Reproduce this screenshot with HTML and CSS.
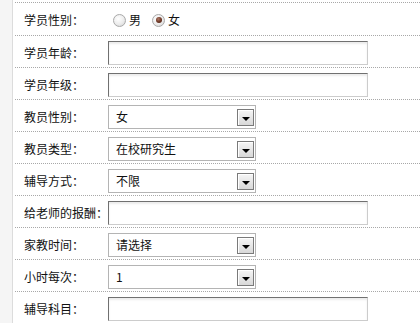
FILE: index.html
```html
<!DOCTYPE html>
<html lang="zh-CN">
<head>
<meta charset="utf-8">
<title>家教信息</title>
<link rel="stylesheet" href="styles.css">
</head>
<body>
<div class="page">
  <div class="side"></div>
  <div class="form">
    <div class="row first">
      <span class="label">学员性别：</span>
      <span class="radios">
        <span class="radio"></span><span class="opt">男</span>
        <span class="radio checked"></span><span class="opt">女</span>
      </span>
    </div>
    <div class="row">
      <span class="label">学员年龄：</span>
      <span class="input"></span>
    </div>
    <div class="row">
      <span class="label">学员年级：</span>
      <span class="input"></span>
    </div>
    <div class="row">
      <span class="label">教员性别：</span>
      <span class="select"><span class="val">女</span><span class="btn"><span class="tri"></span></span></span>
    </div>
    <div class="row">
      <span class="label">教员类型：</span>
      <span class="select"><span class="val">在校研究生</span><span class="btn"><span class="tri"></span></span></span>
    </div>
    <div class="row">
      <span class="label">辅导方式：</span>
      <span class="select"><span class="val">不限</span><span class="btn"><span class="tri"></span></span></span>
    </div>
    <div class="row">
      <span class="label">给老师的报酬：</span>
      <span class="input"></span>
    </div>
    <div class="row">
      <span class="label">家教时间：</span>
      <span class="select"><span class="val">请选择</span><span class="btn"><span class="tri"></span></span></span>
    </div>
    <div class="row">
      <span class="label">小时每次：</span>
      <span class="select"><span class="val">1</span><span class="btn"><span class="tri"></span></span></span>
    </div>
    <div class="row">
      <span class="label">辅导科目：</span>
      <span class="input"></span>
    </div>
  </div>
</div>
</body>
</html>
```

FILE: styles.css
```css
html, body {
  margin: 0;
  padding: 0;
  background: #fff;
}
body {
  font-family: "Noto Sans CJK SC", "Liberation Sans", sans-serif;
  font-size: 12px;
  color: #111;
}
.page {
  display: flex;
  height: 323px;
  overflow: hidden;
}
.side {
  width: 12px;
  flex: none;
  background: #f5f5f5;
  border-right: 1px solid #dcdcdc;
}
.form {
  flex: 1;
  padding: 2px 0 0 2px;
}
.row {
  display: flex;
  align-items: flex-start;
  height: 32px;
  box-sizing: border-box;
  border-top: 1px dotted #a8a8a8;
  padding: 5px 0 0 9px;
}
.row.first {
  height: 33px;
}
.label {
  width: 84px;
  flex: none;
  line-height: 24px;
  white-space: nowrap;
}
.radios {
  display: flex;
  align-items: center;
  height: 24px;
  margin-left: 5px;
}
.radio {
  width: 11px;
  height: 11px;
  border-radius: 50%;
  border: 1px solid #a9a9a9;
  background: radial-gradient(circle at 40% 35%, #ffffff 0%, #ececec 55%, #cfcfcf 100%);
  display: inline-flex;
  align-items: center;
  justify-content: center;
}
.radio.checked::after {
  content: "";
  width: 6px;
  height: 6px;
  border-radius: 50%;
  background: radial-gradient(circle at 40% 35%, #b07a66 0%, #6a3424 55%, #45200f 100%);
}
.opt {
  margin: 0 11px 0 3px;
  line-height: 24px;
}
.input {
  display: block;
  width: 260px;
  height: 24px;
  box-sizing: border-box;
  border: 1px solid;
  border-color: #707070 #cccccc #cccccc #707070;
  box-shadow: inset 0 2px 2px #ececec;
  background: #fff;
}
.select {
  display: flex;
  align-items: flex-start;
  width: 148px;
  height: 24px;
  box-sizing: border-box;
  border: 1px solid #b4b4b4;
  background: #fff;
}
.val {
  flex: 1;
  padding-left: 7px;
  line-height: 22px;
  font-size: 12px;
}
.btn {
  width: 17px;
  height: 17px;
  box-sizing: border-box;
  margin: 3px 1px 0 0;
  border: 1px solid #7a7a7a;
  background: linear-gradient(#f6f6f6, #d8d8d8);
  box-shadow: inset 1px 1px 0 #fff;
  display: flex;
  justify-content: center;
  align-items: flex-start;
}
.tri {
  margin-top: 7px;
  width: 0;
  height: 0;
  border-left: 4px solid transparent;
  border-right: 4px solid transparent;
  border-top: 4px solid #000;
}
```
